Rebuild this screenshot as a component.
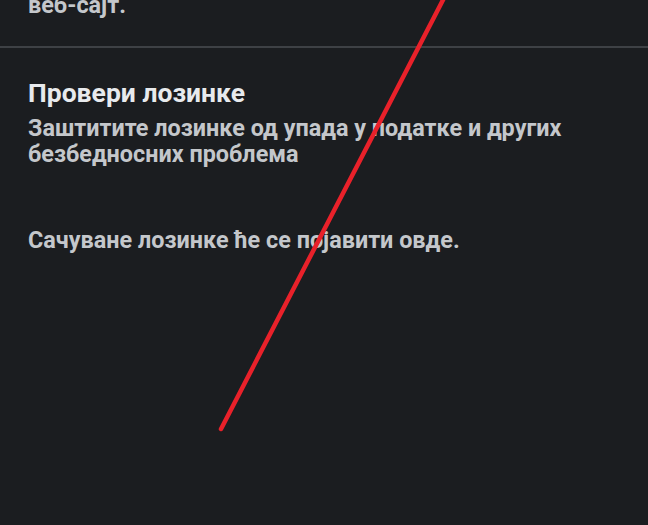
export default function App() {
  return (
    <div
      className="relative h-[525px] w-[648px] overflow-hidden bg-[#1b1d20]"
      style={{ fontFamily: 'Roboto, "Noto Sans", sans-serif' }}
    >
      <div className="-mt-[8px] px-[28px] text-[23.4px] leading-[26px] font-bold text-[#c4c7cb]">
        веб-сајт.
      </div>
      <div className="mt-[28px] h-[2px] w-full bg-[#3e4145]" />

      <section className="px-[28px] pt-[29px]">
        <h2 className="text-[26.5px] leading-[32px] font-bold text-[#e8eaed]">Провери лозинке</h2>
        <p className="mt-[6px] text-[23.4px] leading-[26px] font-bold text-[#c4c7cb]">
          Заштитите лозинке од упада у податке и других
          <br />
          безбедносних проблема
        </p>
        <p className="mt-[60px] text-[23.4px] leading-[26px] font-bold text-[#c4c7cb]">
          Сачуване лозинке ће се појавити овде.
        </p>
      </section>

      <svg className="pointer-events-none absolute inset-0" width="648" height="525" viewBox="0 0 648 525">
        <line x1="444" y1="-2" x2="221" y2="429" stroke="#e9212a" strokeWidth="4.5" strokeLinecap="round" />
      </svg>
    </div>
  );
}
